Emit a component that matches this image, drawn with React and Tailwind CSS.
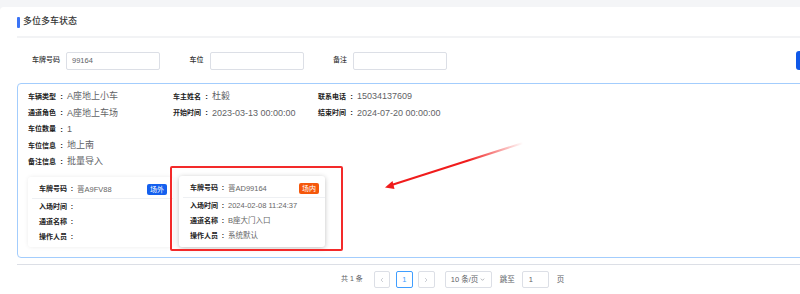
export default function App() {
  const infoRows = [
    [["车辆类型", "A座地上小车"], ["车主姓名", "杜毅"], ["联系电话", "15034137609"]],
    [["通道角色", "A座地上车场"], ["开始时间", "2023-03-13 00:00:00"], ["结束时间", "2024-07-20 00:00:00"]],
    [["车位数量", "1"]],
    [["车位信息", "地上南"]],
    [["备注信息", "批量导入"]],
  ];

  const cars = [
    { plate: "晋A9FV88", inside: false, time: "", gate: "", op: "" },
    { plate: "晋AD99164", inside: true, time: "2024-02-08 11:24:37", gate: "B座大门入口", op: "系统默认" },
  ];

  const fields = [
    { label: "车牌号码", value: "99164" },
    { label: "车位", value: "" },
    { label: "备注", value: "" },
  ];

  return (
    <div
      className="relative w-[800px] h-[294px] overflow-hidden bg-[#f4f5f7]"
      style={{ fontFamily: '"Liberation Sans", "Noto Sans CJK SC", sans-serif' }}
    >
      <div className="mt-[7px] w-[900px] h-[287px] bg-white rounded-tl-[4px]">
        {/* title */}
        <div className="ml-[17px] h-[31px] flex items-center gap-[3px] border-b-2 border-[#f2f3f5] pt-[1px]">
          <span className="w-[3px] h-[11px] bg-[#3b74f6] rounded-[1px]" />
          <span className="text-[9px] text-[#333] font-medium">多位多车状态</span>
        </div>

        {/* search form */}
        <div className="ml-[17px] mt-[13px] flex items-center">
          {fields.map((f) => (
            <div key={f.label} className="flex items-center w-[143.5px]">
              <label className="w-[49px] pr-[6px] text-right text-[7px] text-[#333] font-medium">{f.label}</label>
              <div className="w-[94px] h-[18px] border border-[#dcdfe6] rounded-[2px] flex items-center px-[5px] text-[7.5px] text-[#606266]">
                {f.value}
              </div>
            </div>
          ))}
          <button className="ml-[348px] w-[40px] h-[19px] rounded-[3px] bg-[#1058e8]" />
        </div>

        {/* result box */}
        <div className="ml-[17px] mt-[13px] w-[868px] h-[175px] border border-[#a3cdfd] rounded-l-[4px] pl-[10px] pt-[5px]">
          <div className="flex flex-col">
            {infoRows.map((row, i) => (
              <div key={i} className="flex h-[16.25px] items-center">
                {row.map(([k, v]) => (
                  <div key={k} className="w-[145px] flex items-center whitespace-nowrap">
                    <span className="text-[7px] text-[#222] font-semibold">{k}</span>
                    <span className="w-[11px] text-center text-[8px] text-[#222] font-semibold">:</span>
                    <span className="text-[9px] text-[#5f6266]">{v}</span>
                  </div>
                ))}
              </div>
            ))}
          </div>

          <div className="mt-[7px] flex gap-[6px]">
            {cars.map((c, i) => (
              <div
                key={i}
                className={
                  i === 1
                    ? "w-[146px] h-[71px] bg-white rounded-[3px] shadow-[0_1px_5px_rgba(0,0,0,0.25)] -translate-y-px"
                    : "w-[145px] h-[70px] bg-white rounded-[3px] shadow-[0_0_4px_rgba(0,0,0,0.08)]"
                }
              >
                <div className="flex items-center justify-between h-[21px] pt-[3px] pl-[11px] pr-[6px]">
                  <div className="flex items-center whitespace-nowrap">
                    <span className="text-[7px] text-[#222] font-semibold">车牌号码</span>
                    <span className="w-[10px] text-center text-[7px] text-[#222] font-semibold">:</span>
                    <span className="text-[7.5px] text-[#666]">{c.plate}</span>
                  </div>
                  <span
                    className={
                      c.inside
                        ? "h-[11px] px-[3px] rounded-[2px] bg-[#f5570b] text-white text-[7px] leading-[11px]"
                        : "h-[11px] px-[3px] rounded-[2px] bg-[#1460ee] text-white text-[7px] leading-[11px]"
                    }
                  >
                    {c.inside ? "场内" : "场外"}
                  </span>
                </div>
                <div className="ml-[4px] border-t border-[#eef0f3]" />
                {[["入场时间", c.time], ["通道名称", c.gate], ["操作人员", c.op]].map(([k, v]) => (
                  <div key={k} className="flex items-center h-[15px] pl-[11px] whitespace-nowrap">
                    <span className="text-[7px] text-[#222] font-semibold">{k}</span>
                    <span className="w-[10px] text-center text-[7px] text-[#222] font-semibold">:</span>
                    <span className="text-[7.5px] text-[#666]">{v}</span>
                  </div>
                ))}
              </div>
            ))}
          </div>
        </div>

        {/* pagination */}
        <div className="ml-[17px] mt-[6px] w-[868px] border-t border-[#dcdfe6] pt-[6px] flex items-center text-[7.5px] text-[#606266]">
          <span className="ml-[324px] text-[7px]">共 1 条</span>
          <span className="ml-[11px] w-[16px] h-[17px] border border-[#dcdfe6] rounded-[2px] flex items-center justify-center text-[#c0c4cc]">
            <svg width="6" height="6" viewBox="0 0 6 6" fill="none" stroke="currentColor" strokeWidth="0.8">
              <path d="M4 1L2 3l2 2" />
            </svg>
          </span>
          <span className="ml-[6px] w-[17px] h-[17px] border border-[#409eff] rounded-[2px] flex items-center justify-center text-[#409eff]">1</span>
          <span className="ml-[5px] w-[17px] h-[17px] border border-[#dcdfe6] rounded-[2px] flex items-center justify-center text-[#c0c4cc]">
            <svg width="6" height="6" viewBox="0 0 6 6" fill="none" stroke="currentColor" strokeWidth="0.8">
              <path d="M2 1l2 2-2 2" />
            </svg>
          </span>
          <span className="ml-[10px] w-[47px] h-[17px] border border-[#dcdfe6] rounded-[2px] flex items-center pl-[5px] gap-[2px]">
            10 条/页
            <svg width="5" height="5" viewBox="0 0 6 6" fill="none" stroke="#909399" strokeWidth="0.8">
              <path d="M1 2l2 2 2-2" />
            </svg>
          </span>
          <span className="ml-[8px]">跳至</span>
          <span className="ml-[7px] w-[27px] h-[17px] border border-[#dcdfe6] rounded-[2px] flex items-center pl-[6px]">1</span>
          <span className="ml-[8px]">页</span>
        </div>
      </div>

      {/* annotation */}
      <div className="absolute left-[170px] top-[166px] w-[173px] h-[85px] border-2 border-[#f32a2a] rounded-[2px]" />
      <svg className="absolute left-0 top-0 pointer-events-none" width="800" height="294">
        <defs>
          <linearGradient id="arrowFade" x1="385" y1="187" x2="523" y2="143" gradientUnits="userSpaceOnUse">
            <stop offset="0" stopColor="#f01c1c" />
            <stop offset="0.6" stopColor="#f01c1c" />
            <stop offset="1" stopColor="#f01c1c" stopOpacity="0" />
          </linearGradient>
        </defs>
        <line x1="390" y1="185.5" x2="523" y2="143" stroke="url(#arrowFade)" strokeWidth="2" />
        <polygon points="385,187.5 394.5,189 392.5,181" fill="#f01c1c" />
      </svg>
    </div>
  );
}
